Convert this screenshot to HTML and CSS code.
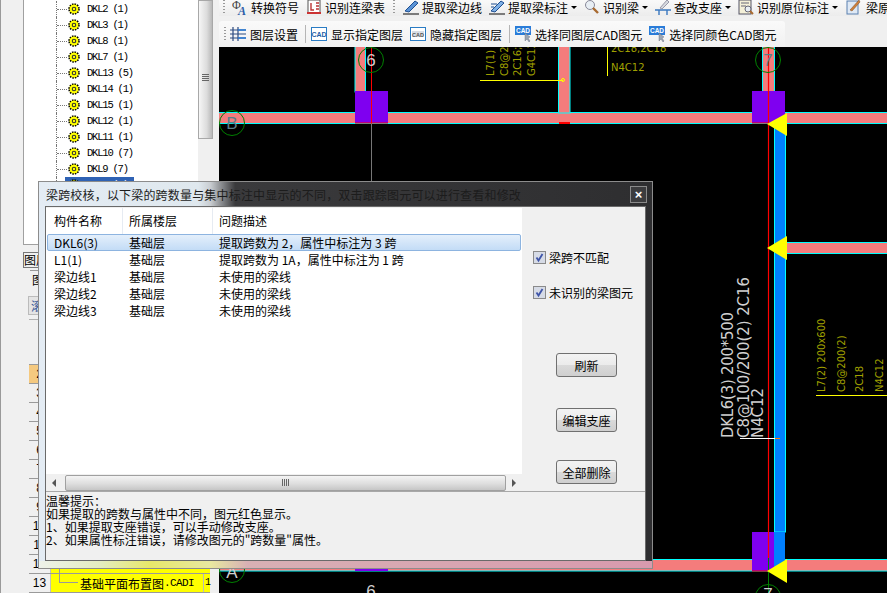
FILE: index.html
```html
<!DOCTYPE html>
<html lang="zh-CN">
<head>
    <meta charset="UTF-8">
    <title>梁跨校核</title>
    <link rel="stylesheet" href="styles.css">
</head>
<body>
    <svg class="defs" width="0" height="0">
        <symbol id="gear" viewBox="0 0 11 11">
            <circle cx="5.5" cy="5.5" r="4.6" fill="#ffff00" stroke="#000" stroke-width="1.4" stroke-dasharray="1.4 1"/>
            <circle cx="5.5" cy="5.5" r="3.4" fill="#ffff00"/>
            <circle cx="5.5" cy="5.5" r="1.6" fill="#ffff00" stroke="#333" stroke-width="1"/>
        </symbol>
    </svg>

    <aside class="side">
        <div class="tree">
            <ul class="tree-list">
                <li><svg class="gear"><use href="#gear"/></svg>DKL2 (1)</li>
                <li><svg class="gear"><use href="#gear"/></svg>DKL3 (1)</li>
                <li><svg class="gear"><use href="#gear"/></svg>DKL8 (1)</li>
                <li><svg class="gear"><use href="#gear"/></svg>DKL7 (1)</li>
                <li><svg class="gear"><use href="#gear"/></svg>DKL13 (5)</li>
                <li><svg class="gear"><use href="#gear"/></svg>DKL14 (1)</li>
                <li><svg class="gear"><use href="#gear"/></svg>DKL15 (1)</li>
                <li><svg class="gear"><use href="#gear"/></svg>DKL12 (1)</li>
                <li><svg class="gear"><use href="#gear"/></svg>DKL11 (1)</li>
                <li><svg class="gear"><use href="#gear"/></svg>DKL10 (7)</li>
                <li><svg class="gear"><use href="#gear"/></svg>DKL9 (7)</li>
                <li class="tree-sel"><svg class="gear"><use href="#gear"/></svg>DKL6 (3)</li>
            </ul>
            <div class="vscroll"><div class="vthumb"><span class="grip-v"></span></div></div>
        </div>
        <div class="layer-title">图层</div>
        <div class="layer-tab">图层</div>
        <div class="layer-btn">滚</div>
        <div class="grid">
            <div class="grid-row grid-head"><b></b><i></i></div>
            <div class="grid-row grid-orange"><b>2</b><i></i></div>
            <div class="grid-row"><b>3</b><i></i></div>
            <div class="grid-row"><b>4</b><i></i></div>
            <div class="grid-row"><b>5</b><i></i></div>
            <div class="grid-row"><b>6</b><i></i></div>
            <div class="grid-row"><b>7</b><i></i></div>
            <div class="grid-row"><b>8</b><i></i></div>
            <div class="grid-row"><b>9</b><i></i></div>
            <div class="grid-row"><b>10</b><i></i></div>
            <div class="grid-row"><b>11</b><i></i></div>
            <div class="grid-row"><b>12</b><i class="cell-yellow"></i></div>
            <div class="grid-row"><b>13</b><i class="cell-yellow"><span class="elbow"></span>基础平面布置图<span class="cell-ext">.CADI</span><em>1</em></i></div>
        </div>
    </aside>

    <main class="main">
        <div class="bar bar-one">
            <span class="grip"></span>
            <div class="tool"><svg class="ico" viewBox="0 0 16 16"><text x="0" y="10" font-size="12" fill="#444" font-family="Liberation Serif">Φ</text><text x="6" y="15.5" font-size="12" font-weight="bold" font-style="italic" fill="#2a5da8" font-family="Liberation Serif">A</text></svg>转换符号</div>
            <div class="tool"><svg class="ico" viewBox="0 0 16 16"><rect x="2" y="1" width="12" height="13" fill="#fff" stroke="#555"/><path d="M1 14h14" stroke="#c33" stroke-width="2"/><path d="M5 4v7h3M10 4h3M10 7h3M10 10h3" stroke="#b33" fill="none" stroke-width="1.4"/></svg>识别连梁表</div>
            <span class="grip grip-wide"></span>
            <div class="tool"><svg class="ico" viewBox="0 0 16 16"><path d="M0 15h16" stroke="#555" stroke-width="1.5"/><path d="M2 12L12 2l3 2L6 13z" fill="#5b93d6" stroke="#1f4f90"/></svg>提取梁边线</div>
            <div class="tool"><svg class="ico" viewBox="0 0 16 16"><path d="M0 15h16" stroke="#555" stroke-width="1.5"/><path d="M2 12L12 2l3 2L6 13z" fill="#7fb0e6" stroke="#1f4f90"/><path d="M2 5h6M2 8h3" stroke="#1f4f90"/></svg>提取梁标注<span class="caret"></span></div>
            <div class="tool"><svg class="ico" viewBox="0 0 16 16"><circle cx="6" cy="6" r="4.5" fill="#e8eef4" stroke="#889"/><path d="M9 9l5 5" stroke="#a86a30" stroke-width="2.4"/></svg>识别梁<span class="caret"></span></div>
            <div class="tool"><svg class="ico" viewBox="0 0 16 16"><path d="M0 11h16M4 11v5M12 11v5" stroke="#3a78c0" stroke-width="1.4"/><path d="M5 9l7-8 2 2-7 7z" fill="#d5d9de" stroke="#99a"/></svg>查改支座<span class="caret"></span></div>
            <div class="tool"><svg class="ico" viewBox="0 0 16 16"><rect x="1" y="1" width="12" height="14" fill="#f4f0d8" stroke="#556"/><path d="M3 4h8M3 7h5" stroke="#667"/><circle cx="10" cy="10" r="3" fill="#e8eef4" stroke="#667"/><path d="M12 12l3 3" stroke="#a86a30" stroke-width="2"/></svg>识别原位标注<span class="caret"></span></div>
            <div class="tool tool-last"><svg class="ico" viewBox="0 0 16 16"><rect x="2" y="2" width="11" height="13" fill="#dfe9f5" stroke="#5a80b0"/><path d="M5 11L14 1l1 2-8 9z" fill="#d0803a" stroke="#7a4a20" stroke-width=".5"/></svg>梁原</div>
        </div>
        <div class="bar bar-two">
            <span class="grip"></span>
            <div class="tool"><svg class="ico" viewBox="0 0 16 16"><path d="M3 1v14M8 1v14M0 4h16M0 8h16M0 12h16" stroke="#2c4a80" fill="none" stroke-width="1.2"/><path d="M8 4h8M8 12h8" stroke="#2a7cd8" stroke-width="1.6"/></svg>图层设置</div>
            <span class="sep"></span>
            <div class="tool"><svg class="ico" viewBox="0 0 16 14"><rect x="0.5" y="0.5" width="15" height="13" fill="#fff" stroke="#2a7cc4"/><text x="8" y="10" font-size="7" font-weight="bold" text-anchor="middle" fill="#1d5fa8" font-family="Liberation Sans">CAD</text></svg>显示指定图层</div>
            <div class="tool"><svg class="ico" viewBox="0 0 16 14"><rect x="0.5" y="0.5" width="15" height="13" fill="#fff" stroke="#2a7cc4"/><rect x="2" y="4" width="12" height="6" fill="#d8dde4"/><text x="8" y="9.5" font-size="5.5" font-weight="bold" text-anchor="middle" fill="#555" font-family="Liberation Sans">CAD</text></svg>隐藏指定图层</div>
            <span class="sep"></span>
            <div class="tool"><svg class="ico" viewBox="0 0 16 16"><rect x="0" y="0" width="16" height="9" fill="#2a7cd8"/><text x="8" y="7.4" font-size="6.5" font-weight="bold" text-anchor="middle" fill="#fff" font-family="Liberation Sans">CAD</text><path d="M10 7l0 8 2-2 2 3 1-1-2-3 2-1z" fill="#9aa6b4" stroke="#667" stroke-width=".4"/></svg>选择同图层CAD图元</div>
            <div class="tool"><svg class="ico" viewBox="0 0 16 16"><rect x="0" y="0" width="16" height="9" fill="#2a7cd8"/><text x="8" y="7.4" font-size="6.5" font-weight="bold" text-anchor="middle" fill="#fff" font-family="Liberation Sans">CAD</text><path d="M10 7l0 8 2-2 2 3 1-1-2-3 2-1z" fill="#9aa6b4" stroke="#667" stroke-width=".4"/></svg>选择同颜色CAD图元</div>
        </div>
        <svg class="cad" viewBox="219 47 668 546" width="668" height="546">
            <!-- beams -->
            <g fill="#f47c7c" stroke="#00ffff">
                <rect x="200" y="112.5" width="700" height="11"/>
                <rect x="200" y="559.5" width="700" height="11.5"/>
                <rect x="786.5" y="242.5" width="110" height="11"/>
                <rect x="355" y="40" width="10.5" height="52"/>
                <rect x="558.5" y="40" width="11.5" height="73"/>
                <rect x="762.5" y="40" width="12" height="52"/>
            </g>
            <rect x="559" y="122" width="11" height="2" fill="#ff0000"/>
            <rect x="774.5" y="120" width="11" height="412" fill="#007fff" stroke="#00ffff"/>
            <!-- columns -->
            <g fill="#7f00f0">
                <rect x="355" y="91" width="33" height="32"/>
                <rect x="752" y="91" width="33" height="32"/>
                <rect x="752" y="532" width="22" height="39"/>
                <rect x="355" y="565" width="33" height="6"/>
            </g>
            <rect x="774" y="532" width="11" height="39" fill="#007fff"/>
            <!-- axis lines -->
            <path d="M371.5 47V123" stroke="#ff0000"/>
            <path d="M371.5 123V181" stroke="#777"/>
            <path d="M355 123H388M752 123H768M752 571H768" stroke="#ff0000"/>
            <path d="M768.5 47V558" stroke="#ff0000" stroke-width="1.2"/>
            <path d="M768.5 558V593" stroke="#008000"/>
            <!-- axis bubbles -->
            <g fill="none" stroke="#008000">
                <circle cx="371" cy="60" r="12.5"/>
                <circle cx="232" cy="123" r="12.5"/>
                <circle cx="768" cy="60" r="12.5"/>
                <circle cx="232" cy="570" r="12.5"/>
                <circle cx="768" cy="597" r="12.5"/>
            </g>
            <g class="axis">
                <text x="371" y="66">6</text>
                <text x="232" y="129" class="axis-dim">B</text>
                <text x="768" y="66" class="axis-dim">7</text>
                <text x="232" y="578">A</text>
                <text x="371" y="597">6</text>
                <text x="768" y="600">7</text>
            </g>
            <!-- support markers -->
            <g fill="#ffff00">
                <path d="M767 124L787 113V136Z"/>
                <path d="M767 248L787 236V260Z"/>
                <path d="M767 571L787 559V583Z"/>
            </g>
            <!-- upper beam note -->
            <path d="M480 80.5H563" stroke="#ffff00"/>
            <circle cx="563" cy="80" r="1.5" fill="none" stroke="#ffff00"/>
            <path d="M607.5 47V76" stroke="#ffff00"/>
            <g class="note">
                <text transform="translate(494 76) rotate(-90)">L7(1)</text>
                <text transform="translate(508 76) rotate(-90)">C8@200(2)</text>
                <text transform="translate(521 76) rotate(-90)">2C16;2C16</text>
                <text transform="translate(535 76) rotate(-90)">G4C12</text>
                <text x="611" y="52">2C18,2C18</text>
                <text x="611" y="71">N4C12</text>
            </g>
            <!-- right beam note -->
            <path d="M816 395.5H887" stroke="#ffff00"/>
            <g class="note">
                <text transform="translate(825 392) rotate(-90)">L7(2) 200x600</text>
                <text transform="translate(845 392) rotate(-90)">C8@200(2)</text>
                <text transform="translate(863 392) rotate(-90)">2C18</text>
                <text transform="translate(883 392) rotate(-90)">N4C12</text>
            </g>
            <!-- selected beam note -->
            <path d="M740 438.5H775" stroke="#ffffff"/>
            <path d="M775 438.5H780" stroke="#ff8000"/>
            <g class="note-main">
                <text transform="translate(733 438) rotate(-90)" textLength="126">DKL6(3) 200*500</text>
                <text transform="translate(749 438) rotate(-90)" textLength="161">C8@100/200(2) 2C16</text>
                <text transform="translate(763 438) rotate(-90)" textLength="50">N4C12</text>
            </g>
        </svg>
    </main>

    <section class="dlg">
        <header class="dlg-title">
            <span>梁跨校核，以下梁的跨数量与集中标注中显示的不同，双击跟踪图元可以进行查看和修改</span>
            <button class="dlg-close">×</button>
        </header>
        <div class="dlg-body">
            <div class="dlg-top">
                <div class="list">
                    <div class="list-head">
                        <span>构件名称</span><span>所属楼层</span><span>问题描述</span>
                    </div>
                    <div class="list-rows">
                        <div class="list-row list-sel"><span>DKL6(3)</span><span>基础层</span><span>提取跨数为 2，属性中标注为 3 跨</span></div>
                        <div class="list-row"><span>L1(1)</span><span>基础层</span><span>提取跨数为 1A，属性中标注为 1 跨</span></div>
                        <div class="list-row"><span>梁边线1</span><span>基础层</span><span>未使用的梁线</span></div>
                        <div class="list-row"><span>梁边线2</span><span>基础层</span><span>未使用的梁线</span></div>
                        <div class="list-row"><span>梁边线3</span><span>基础层</span><span>未使用的梁线</span></div>
                    </div>
                    <div class="hscroll">
                        <span class="arrow-l"></span>
                        <div class="hthumb"><span class="grip-h"></span></div>
                        <span class="arrow-r"></span>
                    </div>
                </div>
                <div class="actions">
                    <label class="check"><svg class="box" viewBox="0 0 13 13"><rect x=".5" y=".5" width="12" height="12" fill="#d6dbe6" stroke="#8a8a8a"/><path d="M3.5 6.5l2 3 4-6.5" fill="none" stroke="#3f55a8" stroke-width="1.8"/></svg>梁跨不匹配</label>
                    <label class="check"><svg class="box" viewBox="0 0 13 13"><rect x=".5" y=".5" width="12" height="12" fill="#d6dbe6" stroke="#8a8a8a"/><path d="M3.5 6.5l2 3 4-6.5" fill="none" stroke="#3f55a8" stroke-width="1.8"/></svg>未识别的梁图元</label>
                    <button class="btn btn-first">刷新</button>
                    <button class="btn btn-second">编辑支座</button>
                    <button class="btn btn-third">全部删除</button>
                </div>
            </div>
            <div class="hint">
                <p>温馨提示：</p>
                <p>如果提取的跨数与属性中不同，图元红色显示。</p>
                <p>1、如果提取支座错误，可以手动修改支座。</p>
                <p>2、如果属性标注错误，请修改图元的"跨数量"属性。</p>
            </div>
        </div>
    </section>
</body>
</html>
```

FILE: styles.css
```css
html, body {
    margin: 0;
    padding: 0;
}

body {
    display: flex;
    position: relative;
    width: 887px;
    height: 593px;
    overflow: hidden;
    background: #f0f0f0;
    font-family: "Noto Sans CJK SC", "Liberation Sans", sans-serif;
    font-size: 12px;
    color: #000;
}

.defs {
    position: absolute;
}

/* left panels */
.side {
    width: 219px;
    height: 593px;
    flex: none;
    box-sizing: border-box;
    padding-left: 16px;
    overflow: hidden;
    background: linear-gradient(90deg, #9a9a9a 0, #9a9a9a 1px, #f0f0f0 1px);
}

.tree {
    display: flex;
    height: 245px;
    margin-left: 7px;
    width: 191px;
    background: #fff;
    border-left: 1px solid #a0a0a0;
    border-bottom: 1px solid #a0a0a0;
    box-sizing: border-box;
}

.tree-list {
    list-style: none;
    margin: 1px 0 0;
    padding: 0;
    flex: 1;
}

.tree-list li {
    display: flex;
    align-items: center;
    height: 16px;
    margin-left: 32px;
    padding-left: 11px;
    border-left: 1px dotted #777;
    font-family: "Liberation Mono", monospace;
    font-size: 10.5px;
    line-height: 18px;
    letter-spacing: -1.2px;
    white-space: nowrap;
    position: relative;
}

.tree-list li::before {
    content: "";
    position: absolute;
    left: 0;
    top: 8px;
    width: 10px;
    border-top: 1px dotted #777;
}

.gear {
    width: 12px;
    height: 12px;
    margin: 0 7px 0 0;
    flex: none;
}

.tree-list .tree-sel {
    background: linear-gradient(#2f62b4, #2f62b4) 8px 0 / 69px 16px no-repeat;
    color: #fff;
}

.vscroll {
    width: 16px;
    background: #f0f0f0;
}

.vthumb {
    display: flex;
    align-items: center;
    justify-content: center;
    height: 139px;
    margin-right: 1px;
    background: linear-gradient(90deg, #f6f6f6, #dcdcdc 60%, #b8b8b8);
    border: 1px solid #a8a8a8;
    box-sizing: border-box;
}

.grip-v {
    width: 7px;
    height: 8px;
    margin-top: 16px;
    background: repeating-linear-gradient(180deg, #666 0 1px, transparent 1px 2px);
}

.layer-title {
    width: 24px;
    margin: 7px 0 0 7px;
    border: 1px solid #777;
    font-size: 12px;
    line-height: 14px;
    overflow: hidden;
    white-space: nowrap;
    height: 14px;
}

.layer-tab {
    width: 24px;
    height: 16px;
    margin: 2px 0 0 14px;
    padding-left: 2px;
    line-height: 18px;
    border-top: 1px solid #999;
}

.layer-btn {
    width: 16px;
    height: 17px;
    margin: 9px 0 0 12px;
    color: #3a5a9a;
    line-height: 17px;
    text-align: center;
    background: #e4e4e4;
    border: 1px solid #bbb;
}

.grid {
    margin: 4px 0 0 13px;
    width: 181px;
}

.grid-row {
    display: flex;
    height: 19px;
    box-sizing: border-box;
    border-bottom: 1px solid #9a9a9a;
    background: #fff;
}

.grid-head {
    height: 46px;
    border-top: 1px solid #b0b0b0;
}

.grid-row b {
    width: 22px;
    flex: none;
    font-family: "Liberation Sans", sans-serif;
    font-weight: normal;
    font-size: 12px;
    line-height: 18px;
    text-align: center;
    background: #f0f0f0;
    border-right: 1px solid #c0c0c0;
    box-sizing: border-box;
}

.grid-orange b {
    background: #f5c97f;
}

.grid-row i {
    flex: 1;
    font-style: normal;
    display: flex;
    align-items: center;
}

.cell-yellow {
    background: #ffff00;
    position: relative;
    padding-left: 29px;
    white-space: nowrap;
    font-size: 12px;
}

.cell-ext {
    font-family: "Liberation Mono", monospace;
    font-size: 11px;
    letter-spacing: -0.6px;
}

.cell-yellow em {
    position: absolute;
    left: 152px;
    font-style: normal;
    padding-left: 1px;
    border-left: 1px solid #bbb;
    font-family: "Liberation Mono", monospace;
    font-size: 10px;
    line-height: 18px;
}

.elbow {
    position: absolute;
    left: 8px;
    top: -6px;
    width: 18px;
    height: 14px;
    border-left: 1px solid #999;
    border-bottom: 1px solid #999;
}

/* toolbars */
.main {
    flex: 1;
    display: flex;
    flex-direction: column;
    min-width: 0;
}

.bar {
    display: flex;
    align-items: center;
    column-gap: 7px;
    white-space: nowrap;
}

.bar-one {
    height: 18px;
    padding-left: 4px;
    margin: -2px 0 5px;
    background: linear-gradient(180deg, #fbfbfb, #ececec);
}

.bar-two {
    height: 26px;
    width: 566px;
    box-sizing: border-box;
    padding-left: 5px;
    background: linear-gradient(180deg, #fafafa, #f1f1f1);
    border-radius: 3px 3px 0 0;
}

.bar-two .grip {
    margin-right: -3px;
}

.bar-two .tool {
    column-gap: 4px;
}

.grip {
    width: 2px;
    height: 14px;
    flex: none;
    background: repeating-linear-gradient(180deg, #999 0 1px, transparent 1px 3px);
}

.grip-wide {
    margin: 0 1px;
}

.sep {
    width: 1px;
    height: 18px;
    flex: none;
    background: #b5b5b5;
    margin-right: -2px;
}

.tool {
    display: flex;
    align-items: center;
    column-gap: 3px;
}

.tool-last {
    column-gap: 5px;
}

.ico {
    width: 16px;
    height: 16px;
    flex: none;
}

.caret {
    width: 0;
    height: 0;
    border: 3px solid transparent;
    border-top: 3px solid #000;
    border-bottom: 0;
}

.cad {
    display: block;
    background: #000;
    flex: none;
}

.axis text {
    font-family: "Liberation Sans", sans-serif;
    font-size: 17px;
    fill: #d0d0d0;
    text-anchor: middle;
}

.axis .axis-dim {
    fill: #5a7f8a;
}

.note text {
    font-family: "DejaVu Sans", sans-serif;
    font-size: 10px;
    fill: #a0a000;
}

.note-main text {
    font-family: "DejaVu Sans", sans-serif;
    font-size: 15px;
    fill: #d0d0d0;
}

/* dialog */
.dlg {
    position: absolute;
    left: 38px;
    top: 181px;
    width: 615px;
    height: 388px;
    box-sizing: border-box;
    padding: 0 6px 7px 6px;
    display: flex;
    flex-direction: column;
    border: 1px solid #8c8c8c;
    background:
        linear-gradient(90deg, #eef2ea 0, #e4ecc0 10%, #e8e86a 18%, #e8e8a0 28%, #d8b0b4 34%, #d89aae 100%) bottom / 100% 7px no-repeat,
        linear-gradient(90deg, #e4ecf4 0, #dfe8ee 26%, #c8ccd0 28%, #3a3a3c 32%, #2e2e30 100%);
}

.dlg-title {
    display: flex;
    align-items: center;
    justify-content: space-between;
    height: 24px;
    flex: none;
    padding-left: 1px;
    white-space: nowrap;
}

.dlg-title span {
    letter-spacing: 0.18px;
    color: #1c1c1c;
}

.dlg-close {
    width: 17px;
    height: 17px;
    margin: 0 -1px 0 0;
    padding: 0;
    border: 1px solid #8a8a8a;
    background: #3c3c3e;
    color: #fff;
    font: bold 13px/13px "Liberation Sans", sans-serif;
}

.dlg-body {
    flex: 1;
    display: flex;
    flex-direction: column;
    min-height: 0;
    background: #f0f0f0;
    border: 1px solid #6a6a6a;
}

.dlg-top {
    display: flex;
    height: 284px;
    flex: none;
    border-bottom: 1px solid #a8a8a8;
}

.list {
    width: 476px;
    margin-top: 1px;
    display: flex;
    flex-direction: column;
    background: #fff;
}

.list-head,
.list-row {
    display: grid;
    grid-template-columns: 75px 90px 1fr;
    padding-left: 8px;
    white-space: nowrap;
}

.list-head {
    height: 25px;
    flex: none;
}

.list-head span {
    line-height: 26px;
}

.list-head span + span {
    margin-left: -7px;
    padding-left: 6px;
    border-left: 1px solid #e6ebf2;
}

.list-rows {
    flex: 1;
    padding-top: 1px;
}

.list-row {
    height: 17px;
    line-height: 17px;
    margin: 0 1px;
    padding-left: 7px;
    box-sizing: border-box;
}

.list-sel {
    line-height: 16px;
    background: linear-gradient(180deg, #e4effb, #c3dcf6);
    border: 1px solid #8db4e0;
    border-radius: 2px;
    padding-left: 6px;
}

.hscroll {
    display: flex;
    align-items: center;
    height: 17px;
    flex: none;
    background: #f0f0f0;
}

.arrow-l,
.arrow-r {
    width: 0;
    height: 0;
    margin: 0 6px;
    border: 4px solid transparent;
}

.arrow-l {
    border-right-color: #555;
    border-left-width: 0;
}

.arrow-r {
    border-left-color: #555;
    border-right-width: 0;
}

.hthumb {
    flex: 1;
    height: 16px;
    display: flex;
    align-items: center;
    justify-content: center;
    background: linear-gradient(180deg, #f4f4f4, #dedede 55%, #c6c6c6);
    border: 1px solid #a0a0a0;
    border-radius: 2px;
    box-sizing: border-box;
    margin-left: 3px;
}

.grip-h {
    width: 8px;
    height: 7px;
    background: repeating-linear-gradient(90deg, #666 0 1px, transparent 1px 2px);
}

.actions {
    flex: 1;
    display: flex;
    flex-direction: column;
    padding: 44px 0 0 11px;
    background: #f0f0f0;
}

.check {
    display: flex;
    align-items: center;
    column-gap: 3px;
    height: 13px;
    margin-bottom: 22px;
    white-space: nowrap;
}

.box {
    width: 13px;
    height: 13px;
    flex: none;
}

.btn {
    width: 61px;
    height: 24px;
    padding: 0;
    margin-left: 23px;
    border: 1px solid #707070;
    border-radius: 3px;
    background: linear-gradient(180deg, #f3f3f3 0, #ebebeb 50%, #dadada 50%, #cfcfcf 100%);
    font: inherit;
    color: #000;
}

.btn-first {
    margin-top: 32px;
}

.btn-second {
    margin-top: 31px;
}

.btn-third {
    margin-top: 28px;
}

.hint {
    padding: 2px 0 0;
    line-height: 13px;
    white-space: nowrap;
}

.hint p {
    margin: 0;
}
```
